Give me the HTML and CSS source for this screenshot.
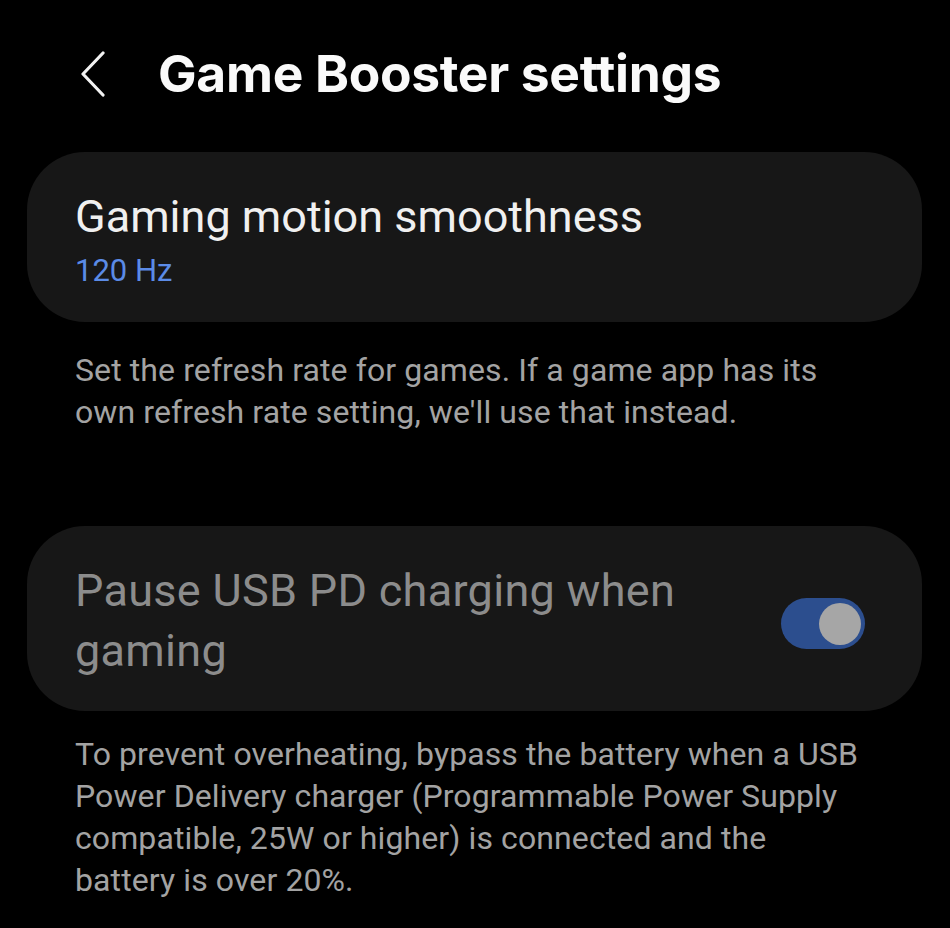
FILE: index.html
```html
<!DOCTYPE html>
<html>
<head>
<meta charset="utf-8">
<link rel="stylesheet" href="styles.css">
</head>
<body>
<div class="page">
  <header class="header">
    <svg class="back" width="30" height="46" viewBox="0 0 30 46"><path d="M25 2 L5 23 L25 44" fill="none" stroke="#f2f2f2" stroke-width="3.2" stroke-linecap="round" stroke-linejoin="round"/></svg>
    <h1 class="title">Game Booster settings</h1>
  </header>

  <section class="card card-one">
    <div class="card-title">Gaming motion smoothness</div>
    <div class="card-value">120 Hz</div>
  </section>
  <p class="desc desc-one">Set the refresh rate for games. If a game app has its own refresh rate setting, we'll use that instead.</p>

  <section class="card card-two">
    <div class="card-title disabled">Pause USB PD charging when gaming</div>
    <div class="toggle"><div class="thumb"></div></div>
  </section>
  <p class="desc desc-two">To prevent overheating, bypass the battery when a USB Power Delivery charger (Programmable Power Supply compatible, 25W or higher) is connected and the battery is over 20%.</p>
</div>
</body>
</html>
```
FILE: styles.css
```css
html, body {
  margin: 0;
  padding: 0;
  background: #000;
}
body {
  font-family: Roboto, "Noto Sans", sans-serif;
  color: #f0f0f0;
  width: 950px;
  height: 928px;
  overflow: hidden;
}
.page {
  padding: 0 28px 0 27px;
}
.header {
  display: flex;
  align-items: center;
  height: 150px;
  padding-left: 51px;
}
.back {
  margin-top: -3px;
}
.title {
  margin: -4px 0 0 50px;
  font-family: Inter, Roboto, sans-serif;
  font-weight: 700;
  font-size: 51.5px;
  letter-spacing: -0.3px;
  color: #fafafa;
}
.card {
  background: #171717;
  border-radius: 58px;
  box-sizing: border-box;
}
.card-one {
  height: 170px;
  padding: 37px 48px 0 48px;
  margin-top: 2px;
}
.card-title {
  font-size: 45px;
  line-height: 56px;
  color: #f0f0f0;
}
.card-value {
  font-size: 31px;
  line-height: 40px;
  color: #5b8be6;
  margin-top: 6px;
}
.desc {
  margin: 0;
  font-size: 32px;
  line-height: 42px;
  letter-spacing: 0.1px;
  color: #a3a3a3;
  padding: 0 48px;
}
.desc-one {
  margin-top: 27px;
}
.card-two {
  margin-top: 93px;
  height: 185px;
  display: flex;
  align-items: center;
  padding: 0 57px 0 48px;
}
.card-two .card-title {
  flex: 1;
  line-height: 60px;
  padding-right: 90px;
  margin-top: 4px;
  letter-spacing: 0.3px;
}
.disabled {
  color: #8c8c8c !important;
}
.toggle {
  width: 84px;
  height: 51px;
  border-radius: 26px;
  background: #2c4e8e;
  position: relative;
  flex-shrink: 0;
  margin-top: 10px;
}
.thumb {
  position: absolute;
  width: 42px;
  height: 42px;
  border-radius: 50%;
  background: #a6a6a6;
  right: 4px;
  top: 4.5px;
}
.desc-two {
  margin-top: 22px;
}
```
